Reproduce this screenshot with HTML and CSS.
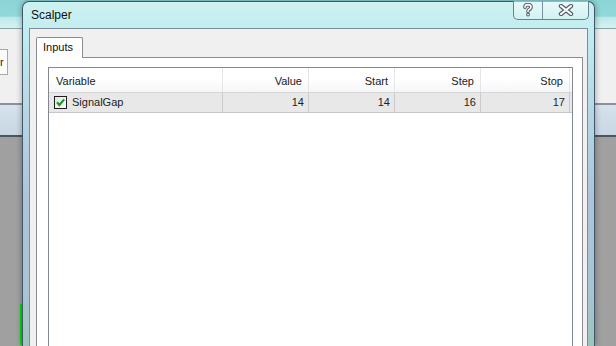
FILE: index.html
```html
<!DOCTYPE html>
<html lang="en">
<head>
  <meta charset="UTF-8" />
  <title>Scalper</title>
  <link rel="stylesheet" href="styles.css">
</head>
<body>
  <!-- desktop behind the dialog -->
  <div class="desktop">
    <div class="bg-top"></div>
    <div class="bg-tools">
      <div class="bg-btn">r</div>
    </div>
    <div class="bg-band"></div>
    <div class="bg-chart"><span class="chart-line"></span></div>
  </div>

  <div class="dialog">
    <div class="titlebar">
      <span class="title">Scalper</span>
      <div class="caption-btns">
        <div class="cap cap-help">
          <svg width="12" height="14" viewBox="0 0 12 14">
            <path d="M3 4.2 Q3 1.6 6 1.6 Q9 1.6 9 4 Q9 5.8 6.6 6.8 Q6 7.1 6 8.6" fill="none" stroke="#505a64" stroke-width="3.6" stroke-linecap="round"/>
            <circle cx="6" cy="11.6" r="1.9" fill="#505a64"/>
            <path d="M3 4.2 Q3 1.6 6 1.6 Q9 1.6 9 4 Q9 5.8 6.6 6.8 Q6 7.1 6 8.6" fill="none" stroke="#fff" stroke-width="1.6" stroke-linecap="round"/>
            <circle cx="6" cy="11.6" r="0.9" fill="#fff"/>
          </svg>
        </div>
        <div class="cap cap-close">
          <svg width="16" height="12" viewBox="0 0 16 12">
            <path d="M3 2 L13 10 M13 2 L3 10" stroke="#505a64" stroke-width="4.4" stroke-linecap="round"/>
            <path d="M3 2 L13 10 M13 2 L3 10" stroke="#fff" stroke-width="2.2" stroke-linecap="round"/>
          </svg>
        </div>
      </div>
    </div>

    <div class="client">
      <div class="tabs">
        <div class="tab">Inputs</div>
      </div>
      <div class="panel">
        <div class="list">
          <div class="row head">
            <div class="cell">Variable</div>
            <div class="cell num">Value</div>
            <div class="cell num">Start</div>
            <div class="cell num">Step</div>
            <div class="cell num">Stop</div>
          </div>
          <div class="row item">
            <div class="cell name">
              <span class="check">
                <svg width="11" height="11" viewBox="0 0 11 11">
                  <path d="M2 5.2 L4.4 8 L9.2 2.4" fill="none" stroke="#1f9a24" stroke-width="2.2"/>
                </svg>
              </span>
              SignalGap
            </div>
            <div class="cell num">14</div>
            <div class="cell num">14</div>
            <div class="cell num">16</div>
            <div class="cell num">17</div>
          </div>
        </div>
      </div>
    </div>
  </div>
</body>
</html>
```

FILE: styles.css
```css
body {
  margin: 0;
  width: 616px;
  height: 346px;
  overflow: hidden;
  position: relative;
  font-family: "Liberation Sans", Arial, sans-serif;
  font-size: 11px;
  color: #1c1c24;
}

/* desktop */
.desktop { display: flex; flex-direction: column; height: 346px; }
.bg-top {
  height: 28px;
  border-bottom: 1px solid #8aa6aa;
  background: linear-gradient(to bottom, #8cd5d6 0, #92d8d9 58%, #bde9ea 62%, #d4f2f2 100%);
}
.bg-tools {
  height: 74px;
  background: #f0f0f0;
  border-bottom: 2px solid #8c9299;
}
.bg-btn {
  margin-top: 20px;
  width: 8px;
  height: 26px;
  box-sizing: border-box;
  border: 1px solid #a8a8a8;
  border-left: none;
  background: #fbfbfb;
  line-height: 24px;
  font-size: 11px;
}
.bg-band {
  height: 30px;
  background: linear-gradient(to bottom, #d6e2ec, #c8d7e4);
  border-bottom: 2px solid #4e555c;
}
.bg-chart { flex: 1; background: #a0a0a0; position: relative; }
.chart-line {
  position: absolute;
  left: 20px;
  top: 167px;
  width: 2px;
  height: 41px;
  background: #00e000;
}

/* dialog window */
.dialog {
  position: absolute;
  left: 22px;
  top: 1px;
  width: 573px;
  height: 345px;
  box-sizing: border-box;
  border: 1px solid #42566a;
  border-bottom: none;
  border-radius: 7px 7px 0 0;
  padding: 0 6px;
  display: flex;
  flex-direction: column;
  background: linear-gradient(to bottom, #cdf1f2 0, #c2edef 28px, #b6d6e4 110px, #aec3d8 200px, #a9c4d2 290px, #9fc4bc 345px);
  box-shadow: 0 0 6px rgba(0, 0, 0, 0.35);
}
.titlebar {
  height: 26px;
  display: flex;
  align-items: flex-start;
}
.title {
  margin-top: 5px;
  padding-left: 2px;
  font-size: 12px;
  line-height: 16px;
  color: #101010;
}
.caption-btns {
  margin-left: auto;
  margin-right: -1px;
  margin-top: -1px;
  display: flex;
  border: 1px solid #6a7f92;
  border-top: none;
  border-radius: 0 0 5px 5px;
  background: linear-gradient(to bottom, rgba(255,255,255,0.55), rgba(255,255,255,0.2));
}
.cap {
  height: 18px;
  display: flex;
  align-items: center;
  justify-content: center;
}
.cap-help { width: 28px; border-right: 1px solid #7d90a2; }
.cap-close { width: 45px; }

.client {
  flex: 1;
  min-height: 0;
  display: flex;
  flex-direction: column;
  border: 1px solid #7d8c9b;
  border-bottom: none;
  background: #f0f0f0;
  padding: 8px 4px 0 6px;
}
.tabs { display: flex; height: 20px; }
.tab {
  position: relative;
  z-index: 1;
  box-sizing: border-box;
  width: 47px;
  height: 21px;
  border: 1px solid #898c95;
  border-bottom: none;
  border-radius: 2px 2px 0 0;
  background: #fff;
  padding: 1px 0 0 6px;
  line-height: 17px;
  color: #101010;
}
.panel {
  flex: 1;
  border: 1px solid #898c95;
  border-bottom: none;
  background: #fff;
  padding: 9px 9px 0 11px;
  display: flex;
  flex-direction: column;
}
.list {
  flex: 1;
  border: 1px solid #828790;
  border-bottom: none;
  background: #fff;
}
.row {
  display: grid;
  grid-template-columns: 174px 86px 86px 86px 89px;
}
.cell {
  box-sizing: border-box;
  padding: 0 4px 0 7px;
  white-space: nowrap;
}
.num { text-align: right; }
.head {
  height: 25px;
  border-bottom: 1px solid #d5d5d5;
  box-sizing: border-box;
  background: linear-gradient(to bottom, #ffffff 0, #ffffff 45%, #f5f6f7 100%);
}
.head .cell {
  border-right: 1px solid #e2e5e9;
  padding-top: 2px;
  padding-right: 6px;
  line-height: 22px;
  color: #1a1a1a;
}
.item {
  height: 20px;
  box-sizing: border-box;
  border-bottom: 1px solid #c6c6c6;
  background: #e8e8e8;
}
.item .cell {
  border-right: 1px solid #cbcbcb;
  line-height: 19px;
}
.item .name {
  display: flex;
  align-items: center;
  padding-left: 5px;
}
.check {
  box-sizing: border-box;
  width: 13px;
  height: 13px;
  margin-right: 5px;
  border: 1px solid #1e1e1e;
  background: linear-gradient(to bottom right, #e4e4e4, #ffffff);
  display: flex;
}
```
